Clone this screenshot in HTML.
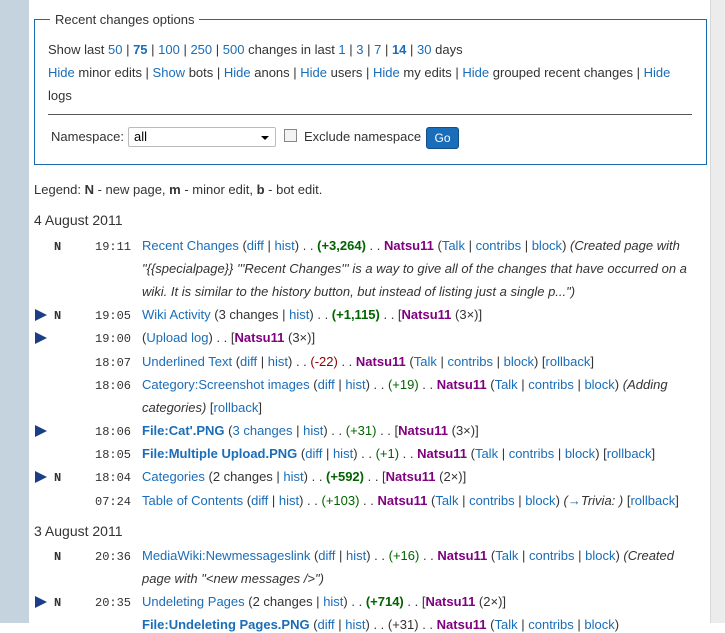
<!DOCTYPE html>
<html><head><meta charset="utf-8"><style>
body{margin:0;width:725px;height:623px;overflow:hidden;background:#fff;font-family:"Liberation Sans",Arial,sans-serif;font-size:13px;color:#333;position:relative}
#side{position:absolute;left:0;top:0;width:29px;height:623px;background:#c5d3df}
#rs{position:absolute;left:710px;top:0;width:15px;height:623px;background:#ececec;border-left:1px solid #d8d8d8}
#fs{position:absolute;left:34px;top:19px;width:671px;height:144px;border:1px solid #1b6aac}
#lg{position:absolute;left:50px;top:12px;background:#fff;padding:0 5px;color:#333}
.t{position:absolute;white-space:nowrap;line-height:16px}
a{color:#1a6db8;text-decoration:none}
b a,a b{color:#1a6db8}
.g{color:#006400;font-weight:bold}.gn{color:#006400}.r{color:#8b0000}
.u{color:#800080;font-weight:bold}
.m{font-family:"Liberation Mono",monospace;font-size:12px;color:#333}
.i{font-style:italic}
.arr{position:absolute;left:35px;width:0;height:0;border-top:6px solid transparent;border-bottom:6px solid transparent;border-left:12px solid #1a3f86}
</style></head><body>
<div id="side"></div><div id="rs"></div>
<div id="fs"></div>
<div id="lg" class="t" style="top:12px">Recent changes options</div>
<div class="t" style="left:48px;top:42px">Show last <a>50</a> | <b><a>75</a></b> | <a>100</a> | <a>250</a> | <a>500</a> changes in last <a>1</a> | <a>3</a> | <a>7</a> | <b><a>14</a></b> | <a>30</a> days</div>
<div class="t" style="left:48px;top:65px"><a>Hide</a> minor edits | <a>Show</a> bots | <a>Hide</a> anons | <a>Hide</a> users | <a>Hide</a> my edits | <a>Hide</a> grouped recent changes | <a>Hide</a></div>
<div class="t" style="left:48px;top:88px">logs</div>
<div style="position:absolute;left:48px;top:114px;width:644px;height:1px;background:#555"></div>
<div class="t" style="left:51px;top:129px">Namespace:</div>
<div style="position:absolute;left:128px;top:127px;width:146px;height:18px;border:1px solid #bbb;border-radius:2px;background:#fff"><span style="position:absolute;left:5px;top:1px;color:#000">all</span><span style="position:absolute;right:6px;top:8px;border-left:4px solid transparent;border-right:4px solid transparent;border-top:4px solid #000"></span></div>
<div style="position:absolute;left:284px;top:129px;width:11px;height:11px;border:1px solid #888;background:#f3f3f3"></div>
<div class="t" style="left:304px;top:129px">Exclude namespace</div>
<div style="position:absolute;left:426px;top:127px;width:31px;height:20px;background:#1a6db8;border:1px solid #0e4f8a;border-radius:3px;color:#fff;font-size:12px;text-align:center;line-height:20px">Go</div>
<div class="t" style="left:34px;top:182px">Legend: <b>N</b> - new page, <b>m</b> - minor edit, <b>b</b> - bot edit.</div>
<div class="t" style="left:34px;top:212px;font-size:14px">4 August 2011</div>

<div class="t m" style="left:54px;top:239px"><b>N</b></div>
<div class="t m" style="left:95px;top:239px">19:11</div>
<div class="t" style="left:142px;top:238px"><a>Recent Changes</a> (<a>diff</a> | <a>hist</a>) . . <span class="g">(+3,264)</span> . . <span class="u">Natsu11</span> (<a>Talk</a> | <a>contribs</a> | <a>block</a>) <span class="i">(Created page with</span></div>
<div class="t i" style="left:142px;top:261px">"{{specialpage}} '''Recent Changes''' is a way to give all of the changes that have occurred on a</div>
<div class="t i" style="left:142px;top:284px">wiki. It is similar to the history button, but instead of listing just a single p...")</div>

<div class="arr" style="top:309px"></div>
<div class="t m" style="left:54px;top:308px"><b>N</b></div>
<div class="t m" style="left:95px;top:308px">19:05</div>
<div class="t" style="left:142px;top:307px"><a>Wiki Activity</a> (3 changes | <a>hist</a>) . . <span class="g">(+1,115)</span> . . [<span class="u">Natsu11</span> (3×)]</div>

<div class="arr" style="top:332px"></div>
<div class="t m" style="left:95px;top:331px">19:00</div>
<div class="t" style="left:142px;top:330px">(<a>Upload log</a>) . . [<span class="u">Natsu11</span> (3×)]</div>

<div class="t m" style="left:95px;top:355px">18:07</div>
<div class="t" style="left:142px;top:354px"><a>Underlined Text</a> (<a>diff</a> | <a>hist</a>) . . <span class="r">(-22)</span> . . <span class="u">Natsu11</span> (<a>Talk</a> | <a>contribs</a> | <a>block</a>) [<a>rollback</a>]</div>

<div class="t m" style="left:95px;top:378px">18:06</div>
<div class="t" style="left:142px;top:377px"><a>Category:Screenshot images</a> (<a>diff</a> | <a>hist</a>) . . <span class="gn">(+19)</span> . . <span class="u">Natsu11</span> (<a>Talk</a> | <a>contribs</a> | <a>block</a>) <span class="i">(Adding</span></div>
<div class="t" style="left:142px;top:400px"><span class="i">categories)</span> [<a>rollback</a>]</div>

<div class="arr" style="top:425px"></div>
<div class="t m" style="left:95px;top:424px">18:06</div>
<div class="t" style="left:142px;top:423px"><b><a>File:Cat'.PNG</a></b> (<a>3 changes</a> | <a>hist</a>) . . <span class="gn">(+31)</span> . . [<span class="u">Natsu11</span> (3×)]</div>

<div class="t m" style="left:95px;top:447px">18:05</div>
<div class="t" style="left:142px;top:446px"><b><a>File:Multiple Upload.PNG</a></b> (<a>diff</a> | <a>hist</a>) . . <span class="gn">(+1)</span> . . <span class="u">Natsu11</span> (<a>Talk</a> | <a>contribs</a> | <a>block</a>) [<a>rollback</a>]</div>

<div class="arr" style="top:471px"></div>
<div class="t m" style="left:54px;top:470px"><b>N</b></div>
<div class="t m" style="left:95px;top:470px">18:04</div>
<div class="t" style="left:142px;top:469px"><a>Categories</a> (2 changes | <a>hist</a>) . . <span class="g">(+592)</span> . . [<span class="u">Natsu11</span> (2×)]</div>

<div class="t m" style="left:95px;top:494px">07:24</div>
<div class="t" style="left:142px;top:493px"><a>Table of Contents</a> (<a>diff</a> | <a>hist</a>) . . <span class="gn">(+103)</span> . . <span class="u">Natsu11</span> (<a>Talk</a> | <a>contribs</a> | <a>block</a>) <span class="i">(<a>→</a>Trivia: )</span> [<a>rollback</a>]</div>

<div class="t" style="left:34px;top:523px;font-size:14px">3 August 2011</div>

<div class="t m" style="left:54px;top:549px"><b>N</b></div>
<div class="t m" style="left:95px;top:549px">20:36</div>
<div class="t" style="left:142px;top:548px"><a>MediaWiki:Newmessageslink</a> (<a>diff</a> | <a>hist</a>) . . <span class="gn">(+16)</span> . . <span class="u">Natsu11</span> (<a>Talk</a> | <a>contribs</a> | <a>block</a>) <span class="i">(Created</span></div>
<div class="t i" style="left:142px;top:571px">page with "&lt;new messages /&gt;")</div>

<div class="arr" style="top:596px"></div>
<div class="t m" style="left:54px;top:595px"><b>N</b></div>
<div class="t m" style="left:95px;top:595px">20:35</div>
<div class="t" style="left:142px;top:594px"><a>Undeleting Pages</a> (2 changes | <a>hist</a>) . . <span class="g">(+714)</span> . . [<span class="u">Natsu11</span> (2×)]</div>

<div class="t" style="left:142px;top:617px"><b><a>File:Undeleting Pages.PNG</a></b> (<a>diff</a> | <a>hist</a>) . . (+31) . . <span class="u">Natsu11</span> (<a>Talk</a> | <a>contribs</a> | <a>block</a>)</div>
</body></html>
